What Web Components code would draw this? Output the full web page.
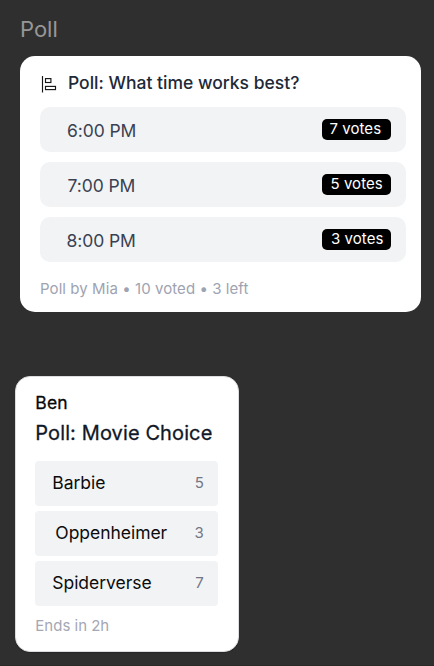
<!DOCTYPE html>
<html lang="en"><head><meta charset="utf-8"><title>Poll</title>
<style>
html,body{margin:0;height:100%}
body{background:#2f2f2f;font-family:Inter,"Liberation Sans",sans-serif;overflow:hidden}
</style></head><body>
<poll-board></poll-board>
<script>
const define=(name,html)=>{
  const t=document.createElement('template');t.innerHTML=html;
  customElements.define(name,class extends HTMLElement{
    constructor(){super();this.attachShadow({mode:'open'}).append(t.content.cloneNode(true));}
  });
};
define('align-icon',`<style>:host{display:block;width:17px;height:18px}svg{display:block}</style>
<svg width="17" height="18" viewBox="0 0 17 18" fill="none" stroke="#161616" stroke-width="1.15"><path d="M2.5 1v16.5"/><rect x="5.5" y="3.6" width="5.4" height="3.9"/><rect x="5.5" y="11.4" width="10" height="3.2"/></svg>`);
define('vote-badge',`<style>:host{display:block;box-sizing:border-box;width:69px;height:20.5px;margin-right:15px;padding-left:var(--inset,8px);border-radius:5px;background:#000;color:#fff;font-size:15px;line-height:20px;letter-spacing:.05px;white-space:nowrap}</style><slot></slot>`);
define('time-option',`<style>:host{display:flex;box-sizing:border-box;height:45px;padding-left:var(--indent,27px);justify-content:space-between;border-radius:10px;background:#f2f3f5;color:#394152;font-size:17.5px;line-height:47px;letter-spacing:-.08px;white-space:nowrap}
::slotted(vote-badge){margin-top:12px}</style><span><slot></slot></span><slot name="votes"></slot>`);
define('time-poll',`<style>:host{display:block;box-sizing:border-box;width:401px;height:256px;padding:18px 15.5px 0 20px;border-radius:15px;background:#fff}
header{display:flex;gap:11px;height:33px}align-icon{margin-top:1px}
h2{margin:0;color:#202938;font-size:17.5px;font-weight:500;line-height:18px;white-space:nowrap}
.rows{display:grid;gap:10px}footer{margin-top:17px;color:#9ea3b1;font-size:15px;line-height:20px;letter-spacing:.07px;white-space:nowrap}</style>
<header><align-icon></align-icon><h2><slot name="title"></slot></h2></header><div class="rows"><slot></slot></div><footer><slot name="footer"></slot></footer>`);
define('movie-poll',`<style>:host{display:block;box-sizing:border-box;width:223.5px;height:275.5px;padding:16px 19.5px 0 19px;border:1px solid #dddde1;border-radius:15px;background:#fff;box-shadow:0 1px 1px #0003}
.author,h2{font-weight:400;-webkit-text-stroke:.3px currentColor}
.author{color:#080808;font-size:17.5px;line-height:20px;letter-spacing:.2px}
h2{margin:8px 0 0;color:#111827;font-size:20px;line-height:24px;letter-spacing:.11px;white-space:nowrap}
.rows{display:grid;gap:5px;margin-top:16px}footer{margin-top:10px;color:#a4a7b4;font-size:15px;line-height:20px}</style>
<div class="author"><slot name="author"></slot></div><h2><slot name="title"></slot></h2><div class="rows"><slot></slot></div><footer><slot name="footer"></slot></footer>`);
define('movie-option',`<style>:host{display:flex;box-sizing:border-box;height:45px;padding:0 14.5px 0 var(--indent,17px);justify-content:space-between;border-radius:4px;background:#f2f3f5;color:#0b0b0b;font-size:17.5px;line-height:44px;letter-spacing:-.04px;white-space:nowrap}
.count{color:#737684;font-size:15px;line-height:43px}</style><span><slot></slot></span><span class="count"><slot name="count"></slot></span>`);
define('poll-board',`<style>:host{display:block;box-sizing:border-box;height:666px;padding:15px 0 0 20px;border-bottom:1px solid #292929}
h1{margin:0;color:#979797;font-size:22px;font-weight:400;line-height:28px}
time-poll{margin-top:13.4px}movie-poll{margin:64px 0 0 -4.7px}</style>
<h1>Poll</h1>
<time-poll><span slot="title">Poll: What time works best?</span>
<time-option>6:00 PM<vote-badge slot="votes">7 votes</vote-badge></time-option>
<time-option style="--indent:27.5px">7:00 PM<vote-badge slot="votes" style="--inset:9px">5 votes</vote-badge></time-option>
<time-option style="--indent:26.5px">8:00 PM<vote-badge slot="votes" style="--inset:9.5px">3 votes</vote-badge></time-option>
<span slot="footer">Poll by Mia • 10 voted • 3 left</span></time-poll>
<movie-poll><span slot="author">Ben</span><span slot="title">Poll: Movie Choice</span>
<movie-option>Barbie<span slot="count">5</span></movie-option>
<movie-option style="--indent:20px">Oppenheimer<span slot="count">3</span></movie-option>
<movie-option>Spiderverse<span slot="count">7</span></movie-option>
<span slot="footer">Ends in 2h</span></movie-poll>`);
</script></body></html>
